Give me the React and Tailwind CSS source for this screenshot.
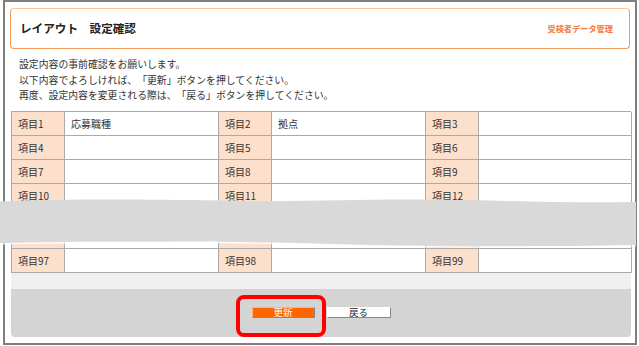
import React from "react";

const FONT = { fontFamily: '"Noto Sans CJK JP", "Noto Sans", sans-serif' };

const rows = [
  ["項目1", "応募職種", "項目2", "拠点", "項目3", ""],
  ["項目4", "", "項目5", "", "項目6", ""],
  ["項目7", "", "項目8", "", "項目9", ""],
  ["項目10", "", "項目11", "", "項目12", ""],
];

function Label({ children, tall }) {
  return (
    <div
      className={`${tall ? "h-[41px]" : "h-[24px]"} border-r border-b border-[#aaaaaa] bg-[#fde0cc] pl-[6px] flex items-center text-[10px] text-[#333]`}
    >
      {children}
    </div>
  );
}

function Value({ children, tall }) {
  return (
    <div
      className={`${tall ? "h-[41px]" : "h-[24px]"} border-r border-b border-[#aaaaaa] bg-white pl-[6px] flex items-center text-[10px] text-[#333]`}
    >
      {children}
    </div>
  );
}

export default function App() {
  return (
    <div className="relative w-[639px] h-[346px] bg-white overflow-hidden [text-spacing-trim:space-all]" style={FONT}>
      <div className="ml-[3px] w-[634px] h-[345px] border-2 border-[#7f7f7f] flex flex-col">
        <div className="mx-[5px] mt-[6px] h-[41px] rounded-[4px] border border-[#f59a58] border-t-[#fcc29a] flex items-center justify-between pl-[9px] pr-[16px]">
          <span className="text-[11.6px] font-bold text-[#222]">レイアウト　設定確認</span>
          <span className="text-[8.2px] font-bold text-[#f47a3c]">受検者データ管理</span>
        </div>

        <div className="mt-[8px] pl-[14px] text-[9.85px] leading-[15.5px] text-[#333]">
          <p>設定内容の事前確認をお願いします。</p>
          <p>以下内容でよろしければ、「更新」ボタンを押してください。</p>
          <p>再度、設定内容を変更される際は、「戻る」ボタンを押してください。</p>
        </div>

        <div className="ml-[6px] w-[620px] mt-[7px]">
          <div className="grid grid-cols-[53px_154px_53px_154px_53px_153px] border-t border-l border-[#aaaaaa]">
            {rows.map((r, i) => (
              <React.Fragment key={i}>
                <Label>{r[0]}</Label>
                <Value>{r[1]}</Value>
                <Label>{r[2]}</Label>
                <Value>{r[3]}</Value>
                <Label>{r[4]}</Label>
                <Value>{r[5]}</Value>
              </React.Fragment>
            ))}
            <Label tall />
            <Value tall />
            <Label tall />
            <Value tall />
            <Label tall />
            <Value tall />
            <Label>項目97</Label>
            <Value />
            <Label>項目98</Label>
            <Value />
            <Label>項目99</Label>
            <Value />
          </div>
          <div className="h-[16px] bg-[#f0f0f0]" />
          <div className="relative h-[48px] bg-[#d4d4d4] rounded-b-[4px] flex items-center justify-center gap-[12px]">
            <button className="w-[63px] h-[11px] bg-[#ff6600] border border-[#ffb380] border-r-[#888] border-b-[#888] text-white text-[9.5px] leading-none flex items-center justify-center">
              更新
            </button>
            <button className="w-[64px] h-[11px] bg-white border border-white border-r-[#888] border-b-[#888] text-[#222] text-[9.5px] leading-none flex items-center justify-center">
              戻る
            </button>
            <div className="absolute left-[225px] top-[6px] w-[90px] h-[42px] border-[4px] border-[#ff0000] rounded-[8px]" />
          </div>
        </div>
      </div>

      <svg className="absolute left-0 top-0 pointer-events-none" width="639" height="346" viewBox="0 0 639 346">
        <path
          d="M0,201.5 C60,199 130,199 220,200.5 C300,202 360,199 420,199.5 C500,200 560,203.5 636,202 L636,245 C560,246.5 470,246.5 400,245.5 C320,244.5 260,241 200,241.5 C120,242 60,241 0,243 Z"
          fill="#d9d9d9"
        />
        <path
          d="M0,244 C60,242 120,243 200,242.5 C260,242 320,245.5 400,246.5 C470,247.5 560,247.5 636,246"
          fill="none"
          stroke="#ffffff"
          strokeWidth="1.2"
        />
      </svg>
    </div>
  );
}
